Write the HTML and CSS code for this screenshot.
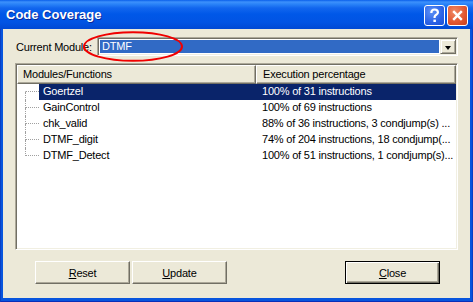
FILE: index.html
```html
<!DOCTYPE html>
<html lang="en">
<head>
  <meta charset="UTF-8" />
  <title>Code Coverage</title>
  <link rel="stylesheet" href="styles.css">
</head>
<body>
  <div class="window">
    <div class="titlebar">
      <span class="title">Code Coverage</span>
      <div class="caption-btns">
        <span class="cap help">
          <svg width="19" height="19" viewBox="0 0 19 19">
            <path d="M6.3 7 C6.3 4.6 7.8 3.5 9.6 3.5 C11.5 3.5 12.9 4.6 12.9 6.4 C12.9 8.4 10.2 8.8 9.6 10.8 L9.6 12" fill="none" stroke="#fff" stroke-width="2.2" />
            <rect x="8.4" y="13.6" width="2.5" height="2.4" fill="#fff" />
          </svg>
        </span>
        <span class="cap close">
          <svg width="19" height="19" viewBox="0 0 19 19">
            <path d="M5.2 5.2 L13.8 13.8 M13.8 5.2 L5.2 13.8" stroke="#fff" stroke-width="2.4" />
          </svg>
        </span>
      </div>
    </div>

    <div class="client">
      <div class="module-row">
        <span class="module-label">Current Module:</span>
        <div class="combo">
          <span class="combo-value">DTMF</span>
          <span class="combo-arrow"></span>
        </div>
        <svg class="mark" width="102" height="32" viewBox="0 0 102 32">
          <ellipse cx="51" cy="15.5" rx="49" ry="14.3" fill="none" stroke="#f00000" stroke-width="2" />
        </svg>
      </div>

      <div class="list">
        <div class="list-head">
          <span class="head-cell head-name">Modules/Functions</span>
          <span class="head-cell head-exec">Execution percentage</span>
        </div>
        <div class="row first selected">
          <span class="twig"><i class="up"></i><i class="down"></i></span>
          <span class="cell name">Goertzel</span>
          <span class="cell exec">100% of 31 instructions</span>
        </div>
        <div class="row">
          <span class="twig"><i class="up"></i><i class="down"></i></span>
          <span class="cell name">GainControl</span>
          <span class="cell exec">100% of 69 instructions</span>
        </div>
        <div class="row">
          <span class="twig"><i class="up"></i><i class="down"></i></span>
          <span class="cell name">chk_valid</span>
          <span class="cell exec">88% of 36 instructions, 3 condjump(s) ...</span>
        </div>
        <div class="row">
          <span class="twig"><i class="up"></i><i class="down"></i></span>
          <span class="cell name">DTMF_digit</span>
          <span class="cell exec">74% of 204 instructions, 18 condjump(...</span>
        </div>
        <div class="row last">
          <span class="twig"><i class="up"></i><i class="down"></i></span>
          <span class="cell name">DTMF_Detect</span>
          <span class="cell exec">100% of 51 instructions, 1 condjump(s)...</span>
        </div>
      </div>

      <div class="buttons">
        <button class="btn"><u>R</u>eset</button>
        <button class="btn btn-update"><u>U</u>pdate</button>
        <button class="btn btn-close"><u>C</u>lose</button>
      </div>
    </div>
  </div>
</body>
</html>
```

FILE: styles.css
```css
body {
  margin: 0;
  font-family: 'Liberation Sans', Arial, sans-serif;
  font-size: 11px;
  letter-spacing: -0.2px;
  color: #000;
  background: #fff;
}

.window {
  width: 473px;
  height: 302px;
  display: flex;
  flex-direction: column;
  background: #0855dd;
  box-shadow: inset 1px 0 0 #0a3fc4, inset -1px 0 0 #0a3fc4, inset 0 -1px 0 #0a2fb8;
}

.titlebar {
  height: 29px;
  flex: none;
  display: flex;
  align-items: center;
  background: linear-gradient(#0a5fea 0, #3d91fb 2px, #2b84f8 4px, #1266ee 8px, #0058e8 14px, #0154e4 22px, #0049d4 29px);
}

.title {
  padding-left: 6px;
  font-size: 13px;
  font-weight: bold;
  letter-spacing: 0;
  color: #fff;
  text-shadow: 1px 1px 0 #0a2a9a;
  margin-top: -1px;
}

.caption-btns {
  margin-left: auto;
  margin-right: 5px;
  display: flex;
  gap: 2px;
  margin-top: 2px;
}

.cap {
  width: 19px;
  height: 19px;
  border: 1px solid #fff;
  border-radius: 3px;
  display: block;
}

.cap svg {
  display: block;
}

.help {
  background: radial-gradient(circle at 35% 30%, #5d92f6, #2a62e6 60%, #1b4fd4);
}

.close {
  background: radial-gradient(circle at 35% 30%, #ef8a66, #e1552f 60%, #c8401f);
}

.client {
  flex: 1;
  margin: 0 3px 4px 3px;
  background: #ece9d8;
  display: flex;
  flex-direction: column;
  padding: 8px 12px 14px 12px;
}

.module-row {
  position: relative;
  display: flex;
  align-items: center;
  height: 19px;
}

.module-label {
  width: 81px;
  margin-left: 1px;
}

.combo {
  width: 361px;
  height: 19px;
  box-sizing: border-box;
  border: 1px solid;
  border-color: #aca899 #fff #fff #aca899;
  box-shadow: inset 1px 1px 0 #716f64, inset -1px -1px 0 #f1efe2;
  background: #fff;
  display: flex;
  padding: 2px 1px 2px 2px;
}

.combo-value {
  flex: 1;
  background: #316ac5;
  color: #fff;
  line-height: 13px;
  padding-left: 2px;
  margin-right: 1px;
}

.combo-arrow {
  width: 16px;
  margin-top: -1px;
  margin-bottom: -1px;
  box-sizing: border-box;
  background: #ece9d8;
  border: 1px solid;
  border-color: #f1efe2 #716f64 #716f64 #f1efe2;
  box-shadow: inset 1px 1px 0 #fff, inset -1px -1px 0 #aca899;
  position: relative;
}

.combo-arrow::after {
  content: "";
  position: absolute;
  left: 4px;
  top: 6px;
  border-left: 3.5px solid transparent;
  border-right: 3.5px solid transparent;
  border-top: 4px solid #000;
}

.mark {
  position: absolute;
  left: 67px;
  top: -6px;
}

.list {
  flex: 1;
  margin-top: 7px;
  background: #fff;
  border: 1px solid;
  border-color: #aca899 #fff #fff #aca899;
  box-shadow: inset 1px 1px 0 #716f64, inset -1px -1px 0 #f1efe2;
  padding: 1px;
}

.list-head {
  display: flex;
  height: 19px;
}

.head-cell {
  box-sizing: border-box;
  height: 19px;
  line-height: 17px;
  background: #ece9d8;
  border: 1px solid;
  border-color: #fff #716f64 #716f64 #fff;
  box-shadow: inset -1px -1px 0 #aca899;
  padding-left: 5px;
}

.head-name {
  width: 239px;
}

.head-exec {
  width: 200px;
  padding-left: 6px;
}

.row {
  display: flex;
  height: 16px;
  line-height: 15px;
}

.twig {
  width: 22px;
  display: flex;
  flex-direction: column;
}

.twig i {
  display: block;
  margin-left: 8px;
  height: 8px;
  border-left: 1px dotted #a0a0a0;
}

.twig .up {
  height: 7px;
  width: 13px;
  border-bottom: 1px dotted #a0a0a0;
}

.row.first .up {
  border-left-color: transparent;
}

.row.last .down {
  border-left-color: transparent;
}

.cell {
  white-space: nowrap;
  overflow: hidden;
}

.name {
  width: 213px;
  padding-left: 4px;
}

.exec {
  width: 194px;
  padding-left: 6px;
}

.selected .cell {
  background: #0a246a;
  color: #fff;
}

.buttons {
  display: flex;
  margin-top: 11px;
  height: 23px;
}

.btn {
  font-family: 'Liberation Sans', Arial, sans-serif;
  font-size: 11px;
  letter-spacing: -0.2px;
  width: 95px;
  height: 23px;
  padding: 0;
  background: #ece9d8;
  border: 1px solid;
  border-color: #fff #716f64 #716f64 #fff;
  box-shadow: inset -1px -1px 0 #aca899;
  color: #000;
}

.btn:first-child {
  margin-left: 20px;
}

.btn-update {
  margin-left: 2px;
}

.btn-close {
  margin-left: auto;
  margin-right: 18px;
  border-color: #000;
  box-shadow: inset 1px 1px 0 #fff, inset -1px -1px 0 #716f64, inset -2px -2px 0 #aca899;
}
```
